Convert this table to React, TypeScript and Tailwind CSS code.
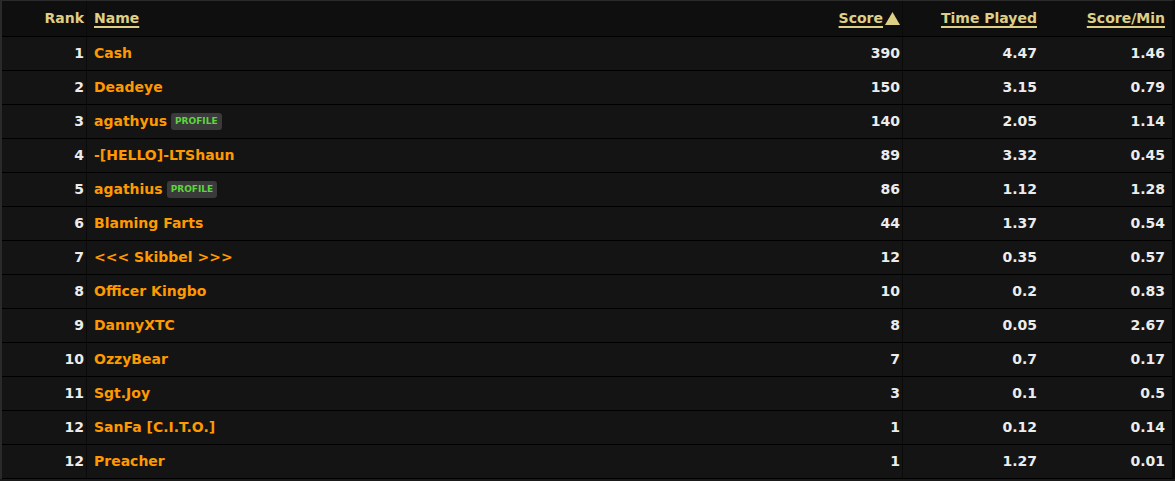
import React from "react";

const rows: { rank: number; name: string; profile?: boolean; score: string; time: string; spm: string }[] = [
  { rank: 1, name: "Cash", score: "390", time: "4.47", spm: "1.46" },
  { rank: 2, name: "Deadeye", score: "150", time: "3.15", spm: "0.79" },
  { rank: 3, name: "agathyus", profile: true, score: "140", time: "2.05", spm: "1.14" },
  { rank: 4, name: "-[HELLO]-LTShaun", score: "89", time: "3.32", spm: "0.45" },
  { rank: 5, name: "agathius", profile: true, score: "86", time: "1.12", spm: "1.28" },
  { rank: 6, name: "Blaming Farts", score: "44", time: "1.37", spm: "0.54" },
  { rank: 7, name: "<<< Skibbel >>>", score: "12", time: "0.35", spm: "0.57" },
  { rank: 8, name: "Officer Kingbo", score: "10", time: "0.2", spm: "0.83" },
  { rank: 9, name: "DannyXTC", score: "8", time: "0.05", spm: "2.67" },
  { rank: 10, name: "OzzyBear", score: "7", time: "0.7", spm: "0.17" },
  { rank: 11, name: "Sgt.Joy", score: "3", time: "0.1", spm: "0.5" },
  { rank: 12, name: "SanFa [C.I.T.O.]", score: "1", time: "0.12", spm: "0.14" },
  { rank: 12, name: "Preacher", score: "1", time: "1.27", spm: "0.01" },
];

const grid = "grid grid-cols-[85px_1fr_73px_140px_129px]";

export default function App() {
  return (
    <div
      className="w-[1175px] h-[481px] bg-[#1a1a1a] overflow-hidden"
      style={{ fontFamily: '"DejaVu Sans", Verdana, sans-serif' }}
    >
      <div className="border-l-2 border-t border-r-[3px] border-l-[#2a2a2a] border-t-[#2a2a2a] border-r-[#0a0a0a] bg-[#141414] text-[14px] font-bold">
        <div className={`${grid} h-[36px] bg-[#0f0f0f] border-b border-black items-center text-[#dfcf86]`}>
          <div className="text-right pr-[2px] border-r border-[#0a0a0a] h-full flex items-center justify-end">Rank</div>
          <div className="pl-[7px]"><span className="underline underline-offset-[3px] decoration-2">Name</span></div>
          <div className="text-right pr-[2px] border-r border-[#0a0a0a] h-full flex items-center justify-end">
            <span className="underline underline-offset-[3px] decoration-2">Score</span>
            <svg width="15" height="13" viewBox="0 0 15 13" className="ml-[2px] mb-[1px]">
              <polygon points="7.5,0 15,13 0,13" fill="#dfcf86" />
            </svg>
          </div>
          <div className="text-right pr-[6px]"><span className="underline underline-offset-[3px] decoration-2">Time Played</span></div>
          <div className="text-right pr-[7px]"><span className="underline underline-offset-[3px] decoration-2">Score/Min</span></div>
        </div>
        {rows.map((r, i) => (
          <div key={i} className={`${grid} h-[34px] border-b border-black items-center text-[#ececec]`}>
            <div className="text-right pr-[2px] border-r border-[#0a0a0a] h-full flex items-center justify-end">{r.rank}</div>
            <div className="pl-[7px] flex items-center text-[#ff9900]">
              <span>{r.name}</span>
              {r.profile && (
                <span className="ml-[4px] h-[17px] px-[4px] rounded-[3px] bg-[#3a3a3a] text-[#5cd63c] text-[9px] flex items-center">
                  PROFILE
                </span>
              )}
            </div>
            <div className="text-right pr-[2px] border-r border-[#0a0a0a] h-full flex items-center justify-end">{r.score}</div>
            <div className="text-right pr-[6px]">{r.time}</div>
            <div className="text-right pr-[7px]">{r.spm}</div>
          </div>
        ))}
      </div>
    </div>
  );
}
